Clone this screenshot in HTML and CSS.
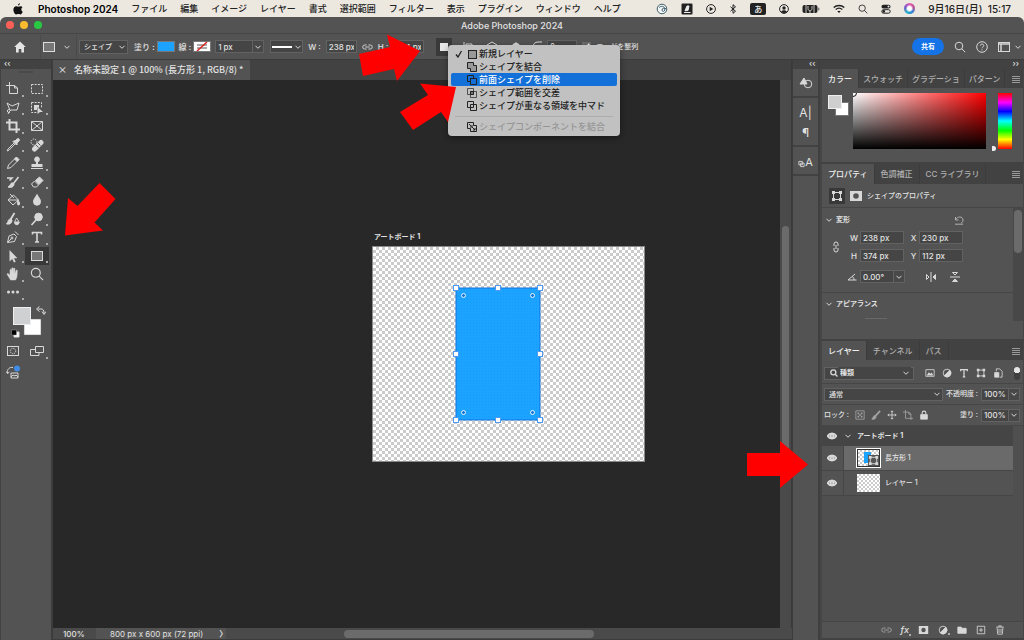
FILE: index.html
```
<!DOCTYPE html>
<html lang="ja">
<head>
  <meta charset="UTF-8">
  <title>Adobe Photoshop 2024</title>
  <link rel="stylesheet" href="styles.css">
</head>
<body>
  <!-- shared icons -->
  <svg class="sprite" width="0" height="0">
    <symbol id="chev" viewBox="0 0 8 8"><path d="M1.500 2.800 4 5.300l2.500-2.500" /></symbol>
    <symbol id="lines" viewBox="0 0 8 8"><path d="M0 1.500h8M0 3.500h8M0 5.500h8M0 7.500h8"/></symbol>
    <symbol id="eye" viewBox="0 0 10 8"><path d="M.7 4C2.500.8 7.500.8 9.300 4 7.500 7.200 2.500 7.200.7 4z"/><circle cx="5" cy="4" r="1.500"/></symbol>
    <symbol id="link" viewBox="0 0 12 8"><path d="M5 1.800H3a2.200 2.200 0 0 0 0 4.400h2M7 1.800h2a2.200 2.200 0 0 1 0 4.400H7M3.500 4h5"/></symbol>
    <symbol id="lens" viewBox="0 0 12 12"><circle cx="5" cy="5" r="3.800"/><path d="m7.800 7.800 3.400 3.400"/></symbol>
    <symbol id="nodes" viewBox="0 0 12 12"><path d="M2.500 2.500h7v7h-7z"/><path class="solid" stroke="none" d="M1 1h3v3H1zM8 1h3v3H8zM1 8h3v3H1zM8 8h3v3H8z"/></symbol>
    <symbol id="half" viewBox="0 0 12 12"><circle cx="6" cy="6" r="4.600"/><path class="solid" d="M9.300 2.700A4.600 4.600 0 0 1 2.700 9.300z"/></symbol>
    <symbol id="mask" viewBox="0 0 14 12"><path class="solid" fill-rule="evenodd" stroke="none" d="M1 1h12v10H1zM7 3.200a2.800 2.800 0 1 0 0 5.600 2.800 2.800 0 0 0 0-5.600z"/></symbol>
  </svg>

  <header class="menubar">
    <svg class="apple" viewBox="0 0 12 14"><path d="M8.300 0c.1 1.300-1 2.700-2.300 2.700C5.800 1.500 7 .2 8.300 0zM10 7.400c0-1.300.7-2 1.500-2.500-.6-.9-1.500-1.300-2.500-1.300-1.100 0-1.900.6-2.600.6-.7 0-1.500-.6-2.500-.6C2 3.600.5 5.200.5 7.800c0 2.900 2 5.700 3.400 5.700.9 0 1.300-.5 2.400-.5s1.400.5 2.400.5c1.300 0 2.500-2 2.900-3.300C10.600 9.700 10 8.700 10 7.400z"/></svg>
    <nav class="menus">
      <a class="app-name" href="#">Photoshop 2024</a>
      <a href="#">ファイル</a>
      <a href="#">編集</a>
      <a href="#">イメージ</a>
      <a href="#">レイヤー</a>
      <a href="#">書式</a>
      <a href="#">選択範囲</a>
      <a href="#">フィルター</a>
      <a href="#">表示</a>
      <a href="#">プラグイン</a>
      <a href="#">ウィンドウ</a>
      <a href="#">ヘルプ</a>
    </nav>
    <div class="status-icons">
      <svg width="12" height="12" viewBox="0 0 12 12"><circle cx="6" cy="6" r="4.800" fill="#f4f6f6" stroke="#3d5f6b"/><path d="M3.200 4.600C5 2.500 8.500 3 8.800 6S6 9 6 7s2-2.200 4-1.200" fill="none" stroke="#3d5f6b"/></svg>
      <svg width="12" height="12" viewBox="0 0 12 12"><rect x=".5" y=".5" width="11" height="11" rx="1" fill="#222"/><path d="M3 9.500h6.500M4 7.800 6 3h2l-1 4.500z" fill="#eee" stroke="#eee"/></svg>
      <svg width="10" height="10" viewBox="0 0 10 10"><circle cx="5" cy="5" r="4.400" fill="none" stroke="#222"/><path d="M3.700 2.800v4.400L7.300 5z" fill="#222"/></svg>
      <svg width="8" height="10" viewBox="0 0 8 10"><path d="m1.500 2.800 5 4.400L4 9.300V.7l2.500 2.100-5 4.400" fill="none" stroke="#222"/></svg>
      <span class="ime">あ</span>
      <svg width="10" height="10" viewBox="0 0 10 10"><circle cx="5" cy="5" r="4.400" fill="none" stroke="#222"/><circle cx="5" cy="4" r="1.700" fill="#222"/><path d="M2 8c1-2.400 5-2.400 6 0-1.500 1.500-4.500 1.500-6 0z" fill="#222"/></svg>
      <svg width="18" height="10" viewBox="0 0 18 10"><rect x=".5" y="1" width="15" height="8" rx="2" fill="#222"/><path d="M16.800 3.700v2.600" stroke="#555"/><path d="M6 2v2.500c0 3 4 3 4 0V2M8 6.500V9M4 1v8M12 1v8" fill="none" stroke="#ece8e0" stroke-width=".8"/></svg>
      <svg width="12" height="10" viewBox="0 0 12 10"><path d="M.7 3.600c3-2.900 7.600-2.900 10.600 0M2.700 5.600c2-1.800 4.600-1.800 6.600 0" fill="none" stroke="#222" stroke-width="1.400"/><path d="M4.300 7.300c1-.9 2.400-.9 3.400 0L6 9z" fill="#222"/></svg>
      <svg class="dark-icon" width="10" height="10"><use href="#lens"/></svg>
      <svg width="10" height="10" viewBox="0 0 10 10"><rect x=".5" y=".8" width="9" height="3.700" rx="1.800" fill="#222"/><circle cx="7.500" cy="2.600" r="1" fill="#eee"/><rect x=".8" y="5.700" width="8.400" height="3.500" rx="1.700" fill="none" stroke="#222"/><circle cx="2.800" cy="7.400" r="1.300" fill="#222"/></svg>
      <span class="siri"></span>
      <time>9月16日(月)&nbsp; 15:17</time>
    </div>
  </header>

  <div class="window">
    <div class="titlebar">
      <span class="light red"></span><span class="light yellow"></span><span class="light green"></span>
      <h1>Adobe Photoshop 2024</h1>
    </div>

    <div class="options">
      <button class="home" aria-label="ホーム"><svg width="12" height="12" viewBox="0 0 12 12"><path d="M6 .5 11.800 6H10v5.500H7.300V8H4.700v3.500H2V6H.2z" fill="#e4e4e4"/></svg></button>
      <button class="tool-preset" aria-label="長方形ツール"><svg width="12" height="10" viewBox="0 0 12 10"><rect x=".5" y=".5" width="11" height="9" fill="#777" stroke="#ddd"/></svg><svg class="chev"><use href="#chev"/></svg></button>
      <select class="mode" aria-label="ツールモード"><option>シェイプ</option></select>
      <div class="fill-stroke">
        <span>塗り :</span><button class="swatch blue" aria-label="塗り"></button>
        <span>線 :</span><button class="swatch none" aria-label="線"><svg width="16" height="9" viewBox="0 0 16 9"><path d="M3 3h10M3 6h10" stroke="#555"/><path d="M3 9 13 0" stroke="#d22" stroke-width="1.500"/></svg></button>
        <span class="combo stroke-width"><input type="text" value="1 px" aria-label="線の幅"><button aria-label="線の幅を選択"><svg class="chev"><use href="#chev"/></svg></button></span>
      </div>
      <button class="stroke-type" aria-label="線の種類"><i></i><svg class="chev"><use href="#chev"/></svg></button>
      <div class="dims">
        <label for="opt-w">W :</label><input type="text" id="opt-w" value="238 px">
        <button aria-label="縦横比を固定"><svg class="icon" width="11" height="8"><use href="#link"/></svg></button>
        <label for="opt-h">H :</label><input type="text" id="opt-h" value="374 px">
      </div>
      <div class="path-ops">
        <button class="active" aria-label="パスの操作"><i></i></button>
        <button aria-label="パスの整列"><svg class="icon" width="12" height="12" viewBox="0 0 12 12"><path d="M2 1v10M4 3h6v2H4zM4 7h4v2H4z"/></svg></button>
        <button aria-label="パスの配置"><svg class="icon" width="12" height="12" viewBox="0 0 12 12"><path d="m6 1 5 3-5 3-5-3zM1 7l5 3 5-3"/></svg></button>
        <button aria-label="設定"><svg class="icon" width="12" height="12" viewBox="0 0 12 12"><circle cx="6" cy="6" r="3" stroke-width="2"/><path d="M6 1v10M1 6h10"/></svg></button>
      </div>
      <div class="corner">
        <svg class="icon" width="10" height="12" viewBox="0 0 10 12"><path d="M1 11V6c0-3 2-5 5-5h4"/></svg>
        <input type="text" value="0 px" aria-label="角丸の半径">
        <input type="checkbox" id="align" checked><label for="align">エッジを整列</label>
      </div>
      <div class="options-right">
        <button class="share">共有</button>
        <button aria-label="検索"><svg class="icon" width="12" height="12"><use href="#lens"/></svg></button>
        <button aria-label="ヘルプ"><svg class="icon" width="12" height="12" viewBox="0 0 12 12"><circle cx="6" cy="6" r="5.300"/><path d="M4.300 4.700c0-2.300 3.500-2.200 3.500 0C7.800 6 6 6 6 7.300M6 8.400v1.100"/></svg></button>
        <button aria-label="ワークスペース"><svg class="icon" width="12" height="12" viewBox="0 0 12 12"><rect x=".5" y="1.500" width="11" height="9"/><path d="M1 3h10M3 3v7" stroke-width="1.500"/></svg></button>
        <svg class="chev"><use href="#chev"/></svg>
      </div>

      <ul class="dropdown">
        <li><button><span class="check"><svg width="8" height="8" viewBox="0 0 8 8"><path d="m1 4.500 2 2.500 3.500-6" fill="none" stroke="#222" stroke-width="1.300"/></svg></span><svg class="op" viewBox="0 0 12 12"><rect x="2.500" y="2.500" width="8" height="8" fill="#999"/></svg>新規レイヤー</button></li>
        <li><button><span class="check"></span><svg class="op" viewBox="0 0 12 12"><path d="M1.500 1.500h6v3h3v6h-6v-3h-3z" fill="#999"/></svg>シェイプを結合</button></li>
        <li><button class="selected"><span class="check"></span><svg class="op" viewBox="0 0 12 12"><path d="M1.500 1.500h6v3h-3v3h-3zM4.500 4.500h6v6h-6z"/></svg>前面シェイプを削除</button></li>
        <li><button><span class="check"></span><svg class="op" viewBox="0 0 12 12"><path d="M1.500 1.500h6v6h-6zM4.500 4.500h6v6h-6z" stroke-width=".7"/><path d="M4.500 4.500h3v3h-3z" fill="#777"/></svg>シェイプ範囲を交差</button></li>
        <li><button><span class="check"></span><svg class="op" viewBox="0 0 12 12"><path d="M1.500 1.500h6v6h-6zM4.500 4.500h6v6h-6z"/></svg>シェイプが重なる領域を中マド</button></li>
        <li class="separator"></li>
        <li><button disabled><span class="check"></span><svg class="op" viewBox="0 0 12 12"><path d="M1.500 1.500h6v3h3v6h-6v-3h-3zM3 3l2 2M6 6l3 3M5 7V5h2M9 7v2H7"/></svg>シェイプコンポーネントを結合</button></li>
      </ul>
    </div>

    <div class="workspace">
      <aside class="toolbar">
        <div class="strip">‹‹</div>
        <div class="grip"></div>
        <div class="tools">
          <button class="more" aria-label="アートボード"><svg class="icon" viewBox="0 0 14 14"><path d="M3.500 0v11.500h8V6L8.500 3.500H0M8.500 3.500V6h3"/></svg></button>
          <button class="more" aria-label="長方形選択"><svg class="icon" viewBox="0 0 14 14"><rect x="1.500" y="2.500" width="11" height="9" stroke-dasharray="2 1.200"/></svg></button>
          <button class="more" aria-label="多角形選択"><svg class="icon" viewBox="0 0 14 14"><path d="M1 2l5 3 7-3-2 7H5L3 11l-1 2M4 9a1.500 1.500 0 1 0 0 2M4 9 1 2"/></svg></button>
          <button class="more" aria-label="オブジェクト選択"><svg class="icon" viewBox="0 0 14 14"><path d="M1.500 1.500h10v5M1.500 1.500v10h5" stroke-dasharray="2 1.200"/><path class="solid" d="M4 4h5v2.500H7V9H4zM7.500 6l5.500 5H10l-2.500 2z" stroke="none"/></svg></button>
          <button class="more" aria-label="切り抜き"><svg class="icon bold" viewBox="0 0 14 14"><path d="M3.500 0v10.500H14M0 3.500h10.500V14"/></svg></button>
          <button aria-label="フレーム"><svg class="icon" viewBox="0 0 14 14"><path d="M1.500 2.500h11v9h-11zM1.500 2.500l11 9M12.500 2.500l-11 9"/></svg></button>
          <button class="more" aria-label="スポイト"><svg class="icon" viewBox="0 0 14 14"><path d="M8 5 2 11l-.8 2L3 12.200 9 6"/><path class="solid" d="m7 3.500 3.500 3.500 1-1-.7-.8L13 3a1.400 1.400 0 0 0-2-2L8.800 3.200 8 2.500z"/></svg></button>
          <button class="more" aria-label="修復ブラシ"><svg class="icon" viewBox="0 0 14 14"><path d="m4.500 11 6.500-6.500" stroke-width="5" stroke-linecap="round"/><circle cx="4" cy="4" r="3" stroke-dasharray="1.500 1"/><path d="m5.500 6.500 3 3M7.500 4.500l3 3" stroke="#535353"/></svg></button>
          <button class="more" aria-label="鉛筆"><svg class="icon" viewBox="0 0 14 14"><path d="m1.500 12.500 1-3.500 7.500-7.500 2.500 2.500L5 11.500z"/><path class="solid" d="m8.500 3 2-2L13 3.500l-2 2z"/></svg></button>
          <button class="more" aria-label="スタンプ"><svg class="icon" viewBox="0 0 14 14"><path class="solid" stroke="none" d="M6 6a2.800 2.800 0 1 1 2 0v2h4.500v3h-11V8H6z"/><path d="M1 12.500h12"/></svg></button>
          <button class="more" aria-label="ヒストリーブラシ"><svg class="icon" viewBox="0 0 14 14"><path d="M1 3h5L3.500 5.500M12.500 2 7.500 8.500" stroke-width="1.600"/><path class="solid" d="M7 8c-2-.5-2.500 1-3 2.500l-2 1.500c3 1 6 0 6-3z"/></svg></button>
          <button class="more" aria-label="消しゴム"><svg class="icon" viewBox="0 0 14 14"><path d="m1.500 9 3-3 4 4-2 2h-3z"/><path class="solid" d="m5.500 5.500 4-3.500L13 5.500l-4 4z"/></svg></button>
          <button class="more" aria-label="塗りつぶし"><svg class="icon" viewBox="0 0 14 14"><path d="m2 7 5.500-5 5 5-5.500 5zM2 7h10M4 1l4 4"/><path class="solid" d="M12 7c2 3 2 5 .5 5s-1-2-.5-5z"/></svg></button>
          <button class="more" aria-label="ぼかし"><svg class="icon" viewBox="0 0 14 14"><path class="solid" d="M7 1.500c1.500 3 3.500 4.500 3.500 7.200a3.500 3.500 0 0 1-7 0C3.500 6 5.500 4.500 7 1.500z"/></svg></button>
          <button aria-label="混合ブラシ"><svg class="icon" viewBox="0 0 14 14"><path d="M8.500 1 4.500 7.500" stroke-width="1.800"/><path class="solid" d="M5 7c-2 0-3 1-3 3L.5 12c2.500.5 5.500 0 5.500-4z"/><path d="M10.500 6c2 3 2.500 3.500 2.500 4.500a2.200 2.200 0 0 1-4.400 0c0-1 .9-2 1.900-4.500z"/><path class="solid" d="M8.800 10H13c0 3-4.200 3-4.200 0z"/></svg></button>
          <button class="more" aria-label="覆い焼き"><svg class="icon" viewBox="0 0 14 14"><circle class="solid" cx="8.500" cy="5" r="3.800"/><path d="m6 8-4.500 5" stroke-width="1.600"/></svg></button>
          <button class="more" aria-label="ペン"><svg class="icon" viewBox="0 0 14 14"><path d="M1.500 12.500 3 6l5-2 2.500 2.500-2 5zM1.500 12.500l4-4M9 1.500 12.500 5"/><circle cx="6" cy="8" r="1"/></svg></button>
          <button class="more" aria-label="文字"><svg class="icon" viewBox="0 0 14 14"><path d="M2.500 4.500V2.500h9v2M7 2.500v9.500M5 12h4" stroke-width="1.600"/></svg></button>
          <button class="more" aria-label="パス選択"><svg class="icon" viewBox="0 0 14 14"><path class="solid" stroke="none" d="M3.500 1v11.500l2.700-2.500L8 13.500l1.700-.8L8 9.300h3.500z"/></svg></button>
          <button class="more current" aria-label="長方形"><svg class="icon" viewBox="0 0 14 14"><rect x="1.500" y="2.500" width="11" height="9" fill="#777"/></svg></button>
          <button class="more" aria-label="手のひら"><svg class="icon" viewBox="0 0 14 14"><path class="solid" d="M4 12 1.200 7.500c-.4-.9.7-1.400 1.400-.6L4 8.300V3c0-1 1.200-1 1.300 0l.4 3.300V1.500c0-1 1.300-1 1.400 0v4.800l.5-4.600c0-1 1.300-.9 1.300.1v5L10.100 3.500c.2-.9 1.300-.8 1.200.2L11 9c-.2 2-1 3-1.500 4h-5z" stroke-width=".5"/></svg></button>
          <button aria-label="ズーム"><svg class="icon"><use href="#lens"/></svg></button>
          <button class="more" aria-label="ツールバーを編集"><svg class="icon" viewBox="0 0 14 14"><path d="M2.500 6h.01M7 6h.01M11.500 6h.01" stroke-width="3" stroke-linecap="round"/></svg></button>
        </div>
        <svg class="colors" viewBox="0 0 36 34">
          <rect x="14" y="14" width="17" height="16" fill="#fff" stroke="#666" stroke-width=".5"/>
          <rect x="3.500" y="2.500" width="17" height="17" fill="#cfd0d2" stroke="#eee"/>
          <path d="M28 4h3c2 0 3 1 3 4M29.500 1.500 26.500 4l3 2.500M32 6.500l2 3 2-3" fill="none" stroke="#ddd"/>
          <path d="M4 27h5v5H4z" fill="#fff" stroke="#ddd"/><path d="M1.500 25h5v5h-5z" fill="#000" stroke="#999" stroke-width=".5"/>
        </svg>
        <div class="tool-modes">
          <button aria-label="クイックマスク"><svg class="icon" viewBox="0 0 14 14"><rect x="1.500" y="2.500" width="11" height="9"/><circle cx="7" cy="7" r="2.700" stroke-dasharray="1.200 .8"/></svg></button>
          <button class="more" aria-label="スクリーンモード"><svg class="icon" viewBox="0 0 14 14"><path d="M5.500 2.500h8v6h-8zM5 5.500H.5v6H9V9"/></svg></button>
          <button aria-label="生成塗りつぶし"><svg class="icon" viewBox="0 0 14 14"><path d="M7 2.500A4.500 4.500 0 0 0 1.500 8M0 6.500 1.500 8.500 3.500 7M5 8h7v5H5zM5 12l2-2 2 1 1-1 2 2"/><circle cx="11" cy="3.500" r="3" fill="#3f8ce8" stroke="none"/></svg></button>
        </div>
      </aside>

      <main class="document">
        <div class="doc-tabs">
          <div class="doc-tab"><button aria-label="閉じる">×</button>名称未設定 1 @ 100% (長方形 1, RGB/8) *</div>
        </div>
        <div class="canvas-row">
          <div class="canvas">
            <div class="artboard-name">アートボード 1</div>
            <div class="artboard">
              <svg class="shape" width="92" height="140" viewBox="0 0 92 140">
                <defs><pattern id="dots" width="3" height="3" patternUnits="userSpaceOnUse"><rect width="3" height="3" fill="#1ba3ff"/><rect width="1" height="1" fill="#139cfa"/></pattern></defs>
                <rect x="4" y="4" width="84" height="132" fill="url(#dots)" stroke="#1473dc"/>
                <g fill="#fff" stroke="#4d9bf5">
                  <rect x="1.500" y="1.500" width="5" height="5"/><rect x="43.500" y="1.500" width="5" height="5"/><rect x="85.500" y="1.500" width="5" height="5"/>
                  <rect x="1.500" y="67.500" width="5" height="5"/><rect x="85.500" y="67.500" width="5" height="5"/>
                  <rect x="1.500" y="133.500" width="5" height="5"/><rect x="43.500" y="133.500" width="5" height="5"/><rect x="85.500" y="133.500" width="5" height="5"/>
                </g>
                <g fill="#1677d8" stroke="#e8f4ff">
                  <circle cx="11.500" cy="11.500" r="2"/><circle cx="80.500" cy="11.500" r="2"/><circle cx="11.500" cy="128.500" r="2"/><circle cx="80.500" cy="128.500" r="2"/>
                </g>
              </svg>
            </div>
          </div>
          <div class="vscroll"><i></i></div>
        </div>
        <footer class="statusbar">
          <span class="zoom">100%</span>
          <span class="doc-size">800 px x 600 px (72 ppi)<b>〉</b></span>
          <div class="hscroll"><i></i></div>
        </footer>
      </main>

      <aside class="dock">
        <div class="strip">‹‹</div>
        <div class="dock-group"><button aria-label="バージョン履歴"><svg class="icon" viewBox="0 0 14 14"><path class="solid" d="M5 2l3 6H1z"/><circle cx="9" cy="8" r="3.800"/></svg></button></div>
        <div class="dock-group pair"><button>A|</button><button>¶</button></div>
        <div class="dock-group last"><button class="glyphs"><svg class="icon" viewBox="0 0 8 8"><path d="M1 1h4v4H1zM3 3h4v4H3z"/></svg>A</button></div>
      </aside>

      <aside class="panels">
        <div class="strip right">››</div>
        <section class="panel color-panel">
          <div class="tabs">
            <button class="on">カラー</button><button>スウォッチ</button><button>グラデーショ</button><button>パターン</button>
            <svg class="panel-menu"><use href="#lines"/></svg>
          </div>
          <div class="color-body">
            <svg class="pair-swatch" width="22" height="22" viewBox="0 0 22 22"><rect x="7.500" y="7.500" width="13" height="13" fill="#fff" stroke="#777"/><rect x=".5" y=".5" width="13" height="13" fill="#cfcfcf" stroke="#eee"/></svg>
            <div class="field"><i></i></div>
            <div class="hue"><i></i></div>
          </div>
        </section>

        <section class="panel props-panel">
          <div class="tabs">
            <button class="on">プロパティ</button><button>色調補正</button><button>CC ライブラリ</button>
            <svg class="panel-menu"><use href="#lines"/></svg>
          </div>
          <div class="props-head">
            <span class="box"><svg class="icon" width="12" height="12"><use href="#nodes"/></svg></span>
            <svg class="icon" width="14" height="12"><use href="#mask"/></svg>
            シェイプのプロパティ
          </div>
          <div class="props-scroll">
            <div class="props-body">
              <h3><svg class="chev"><use href="#chev"/></svg>変形<button aria-label="リセット"><svg class="icon" width="10" height="10" viewBox="0 0 10 10"><path d="M1.500 5h3M1.500 5V2M1.500 5C3 1 9 1 9 5c0 2-1 3-2 3M1 9.200h8"/></svg></button></h3>
              <div class="transform">
                <svg class="icon chain" width="8" height="12" viewBox="0 0 8 12"><path d="M2 5V3a2 2 0 0 1 4 0v2M2 7v2a2 2 0 0 0 4 0V7M4 4v4"/></svg>
                <label for="w">W</label><input type="text" id="w" value="238 px">
                <label for="x">X</label><input type="text" id="x" value="230 px">
                <label for="h">H</label><input type="text" id="h" value="374 px">
                <label for="y">Y</label><input type="text" id="y" value="112 px">
              </div>
              <div class="rotate">
                <label for="angle"><svg class="icon" width="10" height="8" viewBox="0 0 10 8"><path d="M8 1 1 7h8.500M5 3.500C6.500 4 7 5 7 7"/></svg></label>
                <span class="combo"><input type="text" id="angle" value="0.00°"><button aria-label="角度を選択"><svg class="chev"><use href="#chev"/></svg></button></span>
                <button class="flip" aria-label="水平方向に反転"><svg class="icon" width="12" height="10" viewBox="0 0 12 10"><path d="M1.500 2.500v5L4 5zM6 0v10"/><path class="solid" d="M10.500 2.500v5L8 5z"/></svg></button>
                <button class="flip" aria-label="垂直方向に反転"><svg class="icon" width="10" height="12" viewBox="0 0 10 12"><path d="M2.500 1.500h5L5 4zM0 6h10" /><path class="solid" d="M2.500 10.500h5L5 8z"/></svg></button>
              </div>
              <h3 class="appearance"><svg class="chev"><use href="#chev"/></svg>アピアランス</h3>
              <i class="cut"></i>
            </div>
            <div class="props-bar"><i></i></div>
          </div>
        </section>

        <section class="panel layers-panel">
          <div class="tabs">
            <button class="on">レイヤー</button><button>チャンネル</button><button>パス</button>
            <svg class="panel-menu"><use href="#lines"/></svg>
          </div>
          <div class="row filter">
            <div class="kind"><svg class="icon"><use href="#lens"/></svg><select aria-label="フィルターの種類"><option>種類</option></select></div>
            <div class="filter-icons">
              <svg class="icon" viewBox="0 0 12 12"><path d="M1 2h10v8H1z"/><path class="solid" d="m2 9 2.500-4 2 2L8 5.500 10 9z" stroke="none"/></svg>
              <svg class="icon"><use href="#half"/></svg>
              <svg class="icon" viewBox="0 0 12 12"><path d="M2 4V2h8v2M6 2v8.500M4.500 10.500h3" stroke-width="1.500"/></svg>
              <svg class="icon"><use href="#nodes"/></svg>
              <svg class="icon" viewBox="0 0 12 12"><path d="M4 4V1h4l3 3v7H8"/><path class="solid" d="M2 5.500h5V11H2z"/></svg>
            </div>
            <span class="toggle"></span>
          </div>
          <div class="row blend">
            <select aria-label="描画モード"><option>通常</option></select>
            <label for="opacity">不透明度 :</label>
            <span class="combo"><input type="text" id="opacity" value="100%"><button aria-label="不透明度を選択"><svg class="chev"><use href="#chev"/></svg></button></span>
          </div>
          <div class="row lock">
            <span>ロック :</span>
            <svg class="icon dim" viewBox="0 0 12 12"><path d="M1 1h10v10H1z"/><path class="solid" stroke="none" d="M3 3h2v2H3zM7 3h2v2H7zM5 5h2v2H5zM3 7h2v2H3zM7 7h2v2H7z"/></svg>
            <svg class="icon dim" viewBox="0 0 12 12"><path d="M11 1 5.500 7" stroke-width="2"/><path class="solid" d="M5 6.500c-2 0-2 2-4 4.500 3 .5 5-.5 5-3z"/></svg>
            <svg class="icon" viewBox="0 0 12 12"><path d="M6 1v10M1 6h10M4.500 2.500 6 1l1.500 1.500M4.500 9.500 6 11l1.500-1.500M2.500 4.500 1 6l1.500 1.500M9.500 4.500 11 6 9.500 7.500"/></svg>
            <svg class="icon dim" viewBox="0 0 12 12"><path d="M3 0v10h9M0 2.500h7l2.500 2.500v7M7 2.500V5h2.500"/></svg>
            <svg class="icon" viewBox="0 0 12 12"><path class="solid" d="M2 5.500h8V11H2z"/><path d="M3.800 5V3.500a2.200 2.200 0 0 1 4.400 0V5" stroke-width="1.300"/></svg>
            <label for="fill">塗り :</label>
            <span class="combo"><input type="text" id="fill" value="100%"><button aria-label="塗りを選択"><svg class="chev"><use href="#chev"/></svg></button></span>
          </div>
          <ul class="layers">
            <li class="group"><svg class="icon eye"><use href="#eye"/></svg><svg class="chev"><use href="#chev"/></svg><b>アートボード 1</b></li>
            <li class="layer active"><span class="vis"><svg class="icon eye"><use href="#eye"/></svg></span><span class="thumb framed"><i></i><svg class="icon" width="11" height="11" viewBox="0 0 12 12"><rect width="12" height="12" fill="#555" stroke="none"/><use href="#nodes"/></svg></span>長方形 1</li>
            <li class="layer"><span class="vis"><svg class="icon eye"><use href="#eye"/></svg></span><span class="thumb"></span>レイヤー 1</li>
          </ul>
          <div class="layer-actions">
            <button class="dim" aria-label="リンク"><svg class="icon" width="11" height="8"><use href="#link"/></svg></button>
            <button class="fx more" aria-label="レイヤースタイル">fx</button>
            <button aria-label="マスク"><svg class="icon" width="11" height="10"><use href="#mask"/></svg></button>
            <button class="more" aria-label="調整レイヤー"><svg class="icon" width="10" height="10"><use href="#half"/></svg></button>
            <button aria-label="グループ"><svg class="icon" width="10" height="10" viewBox="0 0 12 12"><path class="solid" d="M1 2.500h4l1 1.500h5v6H1z"/></svg></button>
            <button aria-label="新規レイヤー"><svg class="icon" width="10" height="10" viewBox="0 0 12 12"><path d="M1.500 1.500h9v9h-9zM6 3.500v5M3.500 6h5"/></svg></button>
            <button aria-label="削除"><svg class="icon" width="10" height="10" viewBox="0 0 12 12"><path d="M1.500 2.500h9M4.500 2.500V1h3v1.500M2.500 3l.7 8h5.600l.7-8M4.800 4.500v5M7.200 4.500v5"/></svg></button>
          </div>
        </section>
      </aside>
    </div>
  </div>

  <!-- red pointers drawn over the window -->
  <svg class="pointers" width="1024" height="640" viewBox="0 0 1024 640">
    <path d="M359 54 390 47 387 34.500 420 51 397 81 394 69 363 76z"/>
    <path d="M456 87 420 83.500 428 95 400 112 413 130 441 112 448 122z"/>
    <path d="M65 235.500 68 198 77.500 206 99.500 183 115.500 199 94.500 222.500 103 230.500z"/>
    <path d="M747 453h33v-12l28 23.500-28 23.500v-12h-33z"/>
  </svg>
</body>
</html>
```
FILE: styles.css
```
* {
  box-sizing: border-box;
}

body {
  margin: 0;
  height: 100vh;
  display: flex;
  flex-direction: column;
  overflow: hidden;
  position: relative;
  font-family: Inter, "Noto Sans CJK JP", sans-serif;
  font-size: 8px;
  font-weight: 500;
  line-height: 12px;
  color: #e2e2e2;
  background: #ece8e0;
}

button, input, select {
  font: inherit;
  color: inherit;
  margin: 0;
  padding: 0;
  border: 0;
  background: none;
}

button {
  display: flex;
  align-items: center;
  justify-content: center;
}

ul {
  list-style: none;
  margin: 0;
  padding: 0;
}

h1, h3 {
  margin: 0;
  font-size: inherit;
}

svg {
  flex: none;
}

.sprite {
  position: absolute;
}

.icon, .chev, .dark-icon, .panel-menu {
  fill: none;
  stroke: #d8d8d8;
  stroke-width: 1;
}

.icon .solid, .solid {
  fill: #d8d8d8;
}

.icon.bold {
  stroke-width: 2;
}

.chev {
  width: 8px;
  height: 8px;
}

.dark-icon {
  stroke: #222;
}

.dim {
  opacity: 0.6;
}

input[type="text"], .mode, .kind, .blend select {
  background-color: #454545;
  border: 1px solid #626262;
  height: 13px;
  padding: 0 2px;
  min-width: 0;
}

select {
  appearance: none;
  background: #454545 url("data:image/svg+xml,%3Csvg xmlns='http://www.w3.org/2000/svg' viewBox='0 0 8 8'%3E%3Cpath d='M1.500 2.800 4 5.300l2.500-2.500' fill='none' stroke='%23d8d8d8'/%3E%3C/svg%3E") no-repeat right 1px center / 8px;
}

.combo {
  display: flex;
}

.combo input {
  width: 28px;
}

.combo button {
  width: 11px;
  height: 13px;
  border: 1px solid #626262;
  border-left: 0;
  background: #484848;
}

/* macOS menu bar */
.menubar {
  height: 17px;
  flex: none;
  display: flex;
  align-items: center;
  padding: 0 13px;
  color: #222;
  font-size: 9px;
}

.apple {
  width: 10px;
  height: 12px;
  margin-right: 15px;
  fill: #111;
}

.menus {
  display: flex;
  gap: 13px;
}

.menus a {
  color: inherit;
  text-decoration: none;
  white-space: nowrap;
}

.menus .app-name {
  font-weight: 600;
  font-size: 10px;
  color: #000;
}

.status-icons {
  margin-left: auto;
  display: flex;
  align-items: center;
  gap: 13px;
  white-space: nowrap;
}

.status-icons time {
  font-size: 10px;
}

.ime {
  width: 16px;
  height: 12px;
  border-radius: 2px;
  background: #222;
  color: #eee;
  font-size: 8px;
  text-align: center;
}

.siri {
  width: 11px;
  height: 11px;
  border-radius: 50%;
  background: radial-gradient(#fff 25%, transparent 50%), conic-gradient(#e25bb0, #c04a90, #2a84d8, #25b4c8, #7655c8, #e25bb0);
}

/* application window */
.window {
  flex: 1;
  min-height: 0;
  display: flex;
  flex-direction: column;
  background: #535353;
  border-radius: 6px 6px 0 0;
}

.titlebar {
  height: 17px;
  flex: none;
  display: flex;
  align-items: center;
  gap: 6px;
  padding-left: 6px;
  border-bottom: 1px solid #454545;
  position: relative;
}

.titlebar h1 {
  position: absolute;
  left: 0;
  right: 0;
  top: 3px;
  text-align: center;
  font-size: 9px;
  font-weight: 500;
}

.light {
  width: 8px;
  height: 8px;
  border-radius: 50%;
}

.red { background: #fe5f57; }
.yellow { background: #febb2e; }
.green { background: #28c840; }

.options {
  height: 26px;
  flex: none;
  display: flex;
  align-items: center;
  padding: 0 2px 0 14px;
  border-bottom: 1px solid #3c3c3c;
  position: relative;
  white-space: nowrap;
}

.home {
  width: 12px;
  margin-right: 14px;
}

.tool-preset {
  gap: 8px;
  padding: 0 5px 0 2px;
  height: 24px;
  border-left: 1px solid #4a4a4a;
  border-right: 1px solid #4a4a4a;
}

.mode {
  width: 49px;
  height: 14px;
  margin-left: 2px;
  padding-left: 4px;
  font-size: 7px;
}

.fill-stroke {
  display: flex;
  align-items: center;
  gap: 2px;
  margin-left: 6px;
}

.swatch {
  width: 18px;
  height: 11px;
  border: 1px solid #777;
}

.swatch.blue {
  background: #1ba3ff;
  margin-right: 2px;
}

.swatch.none {
  background: #fff;
}

.stroke-width {
  margin-left: 2px;
}

.stroke-width input {
  width: 38px;
}

.stroke-type {
  width: 33px;
  height: 13px;
  margin-left: 6px;
  gap: 2px;
  border: 1px solid #626262;
  background: #454545;
}

.stroke-type i {
  width: 20px;
  height: 2px;
  background: #fff;
}

.dims {
  display: flex;
  align-items: center;
  gap: 5px;
  margin-left: 5px;
}

.dims input {
  width: 31px;
}

.path-ops {
  display: flex;
  align-items: center;
  gap: 8px;
  margin-left: 12px;
}

.path-ops button {
  width: 16px;
  height: 18px;
}

.path-ops .active {
  background: #3a3a3a;
}

.path-ops i {
  width: 8px;
  height: 8px;
  background: #e8e8e8;
}

.corner {
  display: flex;
  align-items: center;
  gap: 5px;
  margin-left: 8px;
  font-size: 7px;
}

.corner input[type="text"] {
  width: 30px;
}

.corner input[type="checkbox"] {
  width: 9px;
  height: 9px;
  accent-color: #6a6a6a;
}

.options-right {
  display: flex;
  align-items: center;
  gap: 10px;
  margin-left: auto;
}

.options-right .chev {
  margin-left: -6px;
}

.share {
  width: 32px;
  height: 17px;
  border-radius: 9px;
  background: #1473e6;
  color: #fff;
  font-size: 7px;
  font-weight: 700;
}

/* path operation menu */
.dropdown {
  position: absolute;
  z-index: 2;
  left: 448px;
  top: 11px;
  width: 172px;
  padding: 2px 3px 3px;
  border-radius: 4px;
  background: #c1c1c1;
  color: #222;
  box-shadow: 0 2px 6px rgba(0, 0, 0, 0.4);
}

.dropdown button {
  width: 100%;
  height: 13px;
  justify-content: flex-start;
  padding-left: 4px;
  border-radius: 2px;
  font-size: 9px;
  line-height: 13px;
}

.dropdown .selected {
  background: #1370d8;
  color: #fff;
}

.dropdown button:disabled {
  color: #969696;
}

.check {
  width: 11px;
  display: flex;
}

.op {
  width: 12px;
  height: 12px;
  margin-right: 1px;
  fill: none;
  stroke: #222;
}

.separator {
  height: 1px;
  margin: 4px 4px 3px;
  background: #acacac;
}

/* workspace */
.workspace {
  flex: 1;
  min-height: 0;
  display: grid;
  grid-template-columns: 53px 1fr 28px 204px;
  background: #535353;
}

.strip {
  height: 9px;
  flex: none;
  background: #424242;
  padding-left: 3px;
  font-size: 8px;
  line-height: 7px;
}

.strip.right {
  text-align: right;
  padding-right: 5px;
}

.toolbar {
  border-left: 1px solid #424242;
  border-right: 2px solid #3c3c3c;
}

.grip {
  width: 14px;
  height: 2px;
  margin: 2px auto 7px;
  background: #4a4a4a;
}

.tools {
  display: grid;
  grid-template-columns: 24px 24px;
  grid-auto-rows: 1fr;
  height: 222px;
}

.tools button, .tool-modes button {
  position: relative;
  height: 100%;
}

.tools .icon, .tool-modes .icon {
  width: 14px;
  height: 14px;
}

.tools .current {
  background: #383838;
}

.more::after {
  content: "";
  position: absolute;
  right: 1px;
  bottom: 2px;
  width: 2px;
  height: 2px;
  background: #aaa;
}

.colors {
  display: block;
  width: 36px;
  height: 34px;
  margin: 3px 0 1px 9px;
}

.tool-modes {
  display: grid;
  grid-template-columns: 24px 24px;
  grid-auto-rows: 21px;
}

.document {
  display: flex;
  flex-direction: column;
  min-width: 0;
}

.doc-tabs {
  height: 20px;
  flex: none;
  display: flex;
  background: #424242;
  border-right: 1px solid #3a3a3a;
}

.doc-tab {
  display: flex;
  align-items: center;
  gap: 7px;
  padding: 0 7px 0 5px;
  background: #535353;
  font-family: "Noto Sans CJK JP", sans-serif;
  font-size: 9px;
  white-space: nowrap;
}

.canvas-row {
  flex: 1;
  min-height: 0;
  display: flex;
}

.canvas {
  flex: 1;
  position: relative;
  overflow: hidden;
  background: #282828;
}

.artboard-name {
  position: absolute;
  left: 321px;
  top: 151px;
  font-size: 7px;
  font-weight: 700;
}

.artboard {
  position: absolute;
  left: 319px;
  top: 166px;
  width: 273px;
  height: 216px;
  border: 1px solid #8a8a8a;
}

.artboard, .thumb {
  background: repeating-conic-gradient(#cbcbcb 0 25%, #fff 0 50%) 0 0 / 6px 6px;
}

.shape {
  position: absolute;
  left: 79px;
  top: 37px;
}

.vscroll {
  width: 12px;
  padding: 146px 2px 0;
  background: #4a4a4a;
  border-right: 1px solid #3a3a3a;
}

.vscroll i {
  display: block;
  height: 227px;
  border-radius: 4px;
  background: #6b6b6b;
}

.statusbar {
  height: 12px;
  flex: none;
  display: flex;
  background: #4a4a4a;
  border-bottom: 1px solid #3c3c3c;
}

.zoom {
  width: 43px;
  padding-left: 10px;
}

.doc-size {
  width: 130px;
  padding-left: 14px;
  background: #535353;
  font-weight: 400;
  white-space: nowrap;
}

.doc-size b {
  margin-left: 16px;
}

.hscroll {
  flex: 1;
  padding: 2px 0 0 118px;
}

.hscroll i {
  display: block;
  width: 250px;
  height: 8px;
  border-radius: 4px;
  background: #6b6b6b;
}

.dock {
  border-left: 1px solid #3c3c3c;
  border-right: 2px solid #3f3f3f;
}

.dock .strip {
  padding-left: 16px;
}

.dock-group {
  height: 29px;
  display: flex;
  flex-direction: column;
  align-items: center;
  justify-content: center;
  border-bottom: 2px solid #424242;
  font-size: 12px;
  font-weight: 400;
}

.dock-group.pair {
  height: 49px;
  gap: 8px;
  padding-top: 3px;
}

.dock-group.last {
  padding-top: 3px;
}

.dock-group .icon {
  width: 14px;
  height: 14px;
}

.dock-group .glyphs {
  font-size: 11px;
}

.dock-group .glyphs .icon {
  width: 7px;
  height: 8px;
  align-self: flex-end;
}

/* panels */
.panels {
  display: flex;
  flex-direction: column;
  min-width: 0;
}

.panel {
  border-left: 2px solid #464646;
  border-right: 1px solid #464646;
  border-bottom: 2px solid #424242;
}

.tabs {
  display: flex;
  height: 19px;
  background: #424242;
}

.tabs button {
  padding: 0 6px;
  color: #b0b0b0;
  border-right: 1px solid #3c3c3c;
  white-space: nowrap;
}

.tabs .on {
  background: #535353;
  color: #f0f0f0;
}

.panel-menu {
  width: 8px;
  height: 8px;
  margin: 6px 3px 0 auto;
  stroke: #999;
}

.color-panel .tabs button {
  padding: 0 4px;
}

.color-panel .tabs .on {
  padding: 0 6px;
}

.color-body {
  height: 74px;
  display: flex;
  gap: 12px;
  padding: 5px 11px 0 6px;
}

.pair-swatch {
  margin: 2px -9px 0 0;
}

.field {
  flex: 1;
  height: 56px;
  background: linear-gradient(transparent, #000), linear-gradient(90deg, #fff, #f00);
  position: relative;
  overflow: hidden;
}

.field i {
  position: absolute;
  left: -4px;
  top: -4px;
  width: 8px;
  height: 8px;
  border: 1px solid #111;
  border-radius: 50%;
}

.hue {
  width: 14px;
  height: 56px;
  background: linear-gradient(#f00, #f0f 17%, #00f 33%, #0ff 50%, #0f0 67%, #ff0 83%, #f00);
  position: relative;
}

.hue i {
  position: absolute;
  left: -6px;
  bottom: -2px;
  width: 4px;
  height: 5px;
  border-radius: 0 3px 3px 0;
  background: #eee;
}

.props-panel .tabs {
  height: 20px;
}

.props-head {
  height: 24px;
  display: flex;
  align-items: center;
  gap: 4px;
  padding-left: 7px;
  border-bottom: 1px solid #464646;
  font-size: 7px;
}

.props-head .box {
  width: 16px;
  height: 16px;
  display: flex;
  align-items: center;
  justify-content: center;
  background: #383838;
}

.props-scroll {
  display: flex;
  height: 131px;
}

.props-body {
  flex: 1;
}

.props-body h3 {
  display: flex;
  align-items: center;
  height: 23px;
  padding-left: 3px;
  gap: 3px;
  font-size: 7px;
}

.props-body h3 button {
  margin-left: auto;
  margin-right: 49px;
  opacity: 0.7;
}

.transform {
  display: grid;
  grid-template-columns: 22px 16px 44px 15px 44px;
  row-gap: 5px;
  align-items: center;
}

.transform label {
  padding-left: 4px;
  text-align: center;
}

.chain {
  grid-row: 1 / 3;
  justify-self: center;
  margin-left: 6px;
}

.rotate {
  display: flex;
  align-items: center;
  margin-top: 8px;
  padding: 0 0 9px 25px;
}

.rotate label {
  width: 13px;
  height: 8px;
}

.rotate label svg {
  display: block;
}

.rotate .combo input {
  width: 34px;
}

.flip {
  width: 12px;
  margin-left: 12px;
}

.combo + .flip {
  margin-left: 20px;
}

.props-body .appearance {
  border-top: 1px solid #464646;
}

.cut {
  display: block;
  width: 22px;
  height: 1px;
  margin: 3px 0 0 43px;
  background: #686868;
}

.props-bar {
  width: 10px;
  height: 113px;
  padding: 2px 1px;
  background: #484848;
}

.props-bar i {
  display: block;
  height: 43px;
  border-radius: 4px;
  background: #6b6b6b;
}

.layers-panel {
  flex: 1;
  display: flex;
  flex-direction: column;
}

.layers-panel .tabs {
  flex: none;
}

.row {
  height: 21px;
  flex: none;
  display: flex;
  align-items: center;
  gap: 3px;
  padding: 0 3px 0 2px;
  border-bottom: 1px solid #464646;
}

.row.filter {
  height: 24px;
  padding-top: 3px;
}

.row .icon {
  width: 10px;
  height: 10px;
}

.kind {
  width: 90px;
  display: flex;
  align-items: center;
  padding-left: 5px;
  font-size: 7px;
  font-weight: 700;
}

.kind .icon {
  width: 8px;
  height: 8px;
  stroke-width: 2;
}

.kind select {
  flex: 1;
  padding-left: 2px;
}

.filter-icons {
  display: flex;
  gap: 7px;
  margin-left: 8px;
}

.toggle {
  width: 6px;
  height: 13px;
  margin-left: auto;
  border-radius: 3px;
  background: radial-gradient(circle at 3px 3px, #e4e4e4 3px, #3e3e3e 3px);
}

.blend select {
  flex: 1;
  padding-left: 4px;
  font-size: 7px;
}

.blend label, .lock label, .lock span {
  font-size: 7px;
}

.lock {
  gap: 6px;
}

.lock label {
  margin-left: auto;
  margin-right: -3px;
}

.row .combo, .row .combo input {
  font-size: 8px;
}

.layers {
  flex: 1;
  padding-right: 10px;
  background: #4f4f4f;
  font-size: 7px;
}

.eye {
  width: 10px;
  height: 8px;
  stroke-width: 2;
}

.group {
  height: 20px;
  display: flex;
  align-items: center;
  gap: 5px;
  padding-left: 5px;
  background: #454545;
}

.group .chev {
  margin-left: 2px;
}

.layer {
  height: 25px;
  display: flex;
  align-items: center;
  border-bottom: 1px solid #464646;
  background: #535353;
}

.layer.active {
  background: #6a6a6a;
}

.vis {
  width: 22px;
  height: 100%;
  display: flex;
  align-items: center;
  padding-left: 5px;
  background: #535353;
  border-right: 1px solid #464646;
}

.thumb {
  width: 23px;
  height: 18px;
  margin: 0 5px 0 13px;
  position: relative;
  background-size: 4px 4px;
}

.thumb.framed {
  outline: 1px solid #fff;
  border: 1px solid #333;
}

.thumb i {
  position: absolute;
  left: 6px;
  top: 2px;
  width: 7px;
  height: 11px;
  background: #1ba3ff;
}

.thumb svg {
  position: absolute;
  right: 0;
  bottom: 0;
}

.layer-actions {
  height: 17px;
  flex: none;
  display: flex;
  justify-content: flex-end;
  align-items: center;
  gap: 9px;
  padding-right: 18px;
  border-top: 1px solid #464646;
}

.layer-actions button {
  position: relative;
}

.layer-actions .more::after {
  right: -2px;
  bottom: 0;
}

.fx {
  font-size: 9px;
  font-style: italic;
}

/* pointers */
.pointers {
  position: absolute;
  left: 0;
  top: 0;
  z-index: 3;
  fill: #f00;
  pointer-events: none;
}
```
